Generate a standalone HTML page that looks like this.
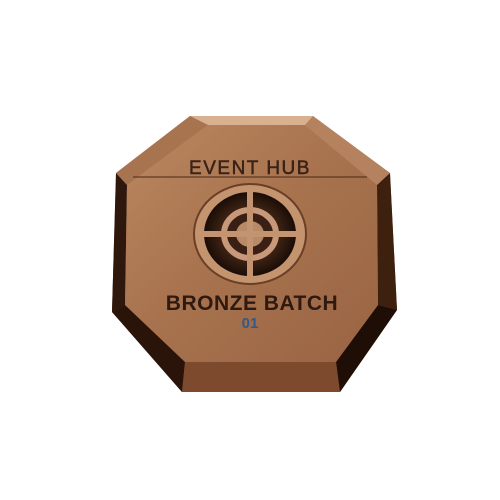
<!DOCTYPE html>
<html><head><style>
html,body{margin:0;padding:0;background:#fff;width:500px;height:500px;overflow:hidden}
</style></head><body>
<svg width="500" height="500" viewBox="0 0 500 500" xmlns="http://www.w3.org/2000/svg">
<defs>
<linearGradient id="face" x1="0" y1="0" x2="1" y2="1">
<stop offset="0" stop-color="#bb8862"/>
<stop offset="0.45" stop-color="#a8734e"/>
<stop offset="1" stop-color="#9a6444"/>
</linearGradient>
<linearGradient id="rim" x1="0" y1="0" x2="0" y2="1">
<stop offset="0" stop-color="#c99a78"/>
<stop offset="0.5" stop-color="#8a5536"/>
<stop offset="1" stop-color="#6a3a22"/>
</linearGradient>
<radialGradient id="dark" cx="0.5" cy="0.5" r="0.5">
<stop offset="0.5" stop-color="#4a2a18"/>
<stop offset="1" stop-color="#1a0d07"/>
</radialGradient>
</defs>
<polygon points="190,116 313,116 390,173 397,310 340,392 182,392 112,312 116,173" fill="url(#rim)"/>
<polygon points="116,173 127,185 125,305 112,312" fill="#2e170d"/>
<polygon points="390,173 377,185 378,305 397,310" fill="#3e200f"/>
<polygon points="112,312 125,305 185,362 182,392" fill="#2a140a"/>
<polygon points="397,310 378,305 336,362 340,392" fill="#1e0e06"/>
<polygon points="182,392 185,362 336,362 340,392" fill="#7d4a2e"/>
<polygon points="190,116 313,116 305,125 208,125" fill="#d9b090"/>
<polygon points="116,173 190,116 208,125 127,185" fill="#a8734f"/>
<polygon points="313,116 390,173 377,185 305,125" fill="#b58260"/>
<polygon points="208,125 305,125 377,185 378,305 336,362 185,362 125,305 127,185" fill="url(#face)"/>
<line x1="133" y1="177" x2="367" y2="177" stroke="#4a2a18" stroke-width="1"/>
<text x="250" y="174" text-anchor="middle" font-family="Liberation Sans, sans-serif" font-size="19" fill="#3a2216" stroke="#3a2216" stroke-width="0.5" letter-spacing="1.5">EVENT HUB</text>
<ellipse cx="250" cy="234" rx="56" ry="50" fill="#c4946f" stroke="#6b3f26" stroke-width="2"/>
<ellipse cx="250" cy="234" rx="46" ry="42" fill="url(#dark)"/>
<ellipse cx="250" cy="234" rx="26" ry="24" fill="#3a2014" stroke="#c8987a" stroke-width="6"/>
<ellipse cx="250" cy="234" rx="14" ry="13" fill="#b88a68"/>
<rect x="247" y="192" width="6" height="84" fill="#c49470"/>
<rect x="204" y="231" width="92" height="6" fill="#c49470"/>
<text x="252" y="310" text-anchor="middle" font-family="Liberation Sans, sans-serif" font-weight="bold" font-size="21" fill="#2e1a10" letter-spacing="0.5">BRONZE BATCH</text>
<text x="250" y="328" text-anchor="middle" font-family="Liberation Sans, sans-serif" font-weight="bold" font-size="15" fill="#2f5b8c">01</text>
</svg>
</body></html>
